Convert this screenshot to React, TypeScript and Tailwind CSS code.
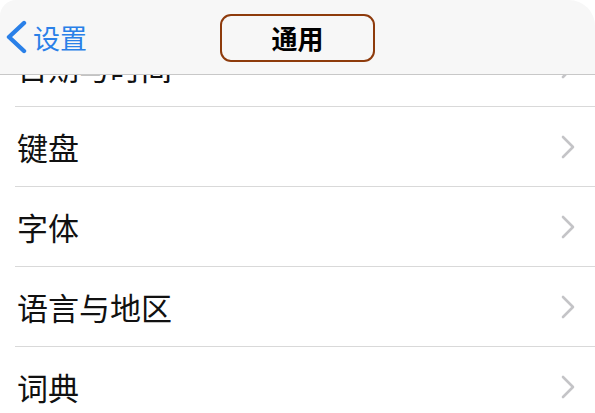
import React from "react";

const rows = ["日期与时间", "键盘", "字体", "语言与地区", "词典"];

function Chevron() {
    return (
        <svg width="16" height="24" viewBox="0 0 16 24" className="shrink-0">
            <path d="M3 2 L13 12 L3 22" fill="none" stroke="#c4c4c7" strokeWidth="2.6" strokeLinecap="round" strokeLinejoin="round" />
        </svg>
    );
}

export default function App() {
    return (
        <div
            className="w-[595px] h-[413px] overflow-hidden bg-white flex flex-col"
            style={{ fontFamily: '"Noto Sans CJK SC", "Noto Sans", sans-serif' }}
        >
            {/* Navigation bar */}
            <div className="relative shrink-0 h-[75px] bg-[#f7f7f7] border-b border-[#c8c8c8] rounded-tl-[16px] rounded-tr-[26px] flex items-center">
                <div className="flex items-center pl-[4px] text-[#2a80e8]">
                    <svg width="24" height="34" viewBox="0 0 24 34">
                        <path d="M20 3 L5 17 L20 31" fill="none" stroke="#2a80e8" strokeWidth="4.4" strokeLinecap="round" strokeLinejoin="round" />
                    </svg>
                    <span className="ml-[5px] text-[27px] leading-none">设置</span>
                </div>
                <div className="absolute left-[220px] top-[14px] w-[155px] h-[48px] rounded-[11px] border-[2.5px] border-[#8e3b0c] flex items-center justify-center">
                    <span className="text-[26px] font-semibold leading-none text-black">通用</span>
                </div>
            </div>

            {/* Settings list, scrolled so the first row sits under the bar */}
            <div className="flex-1 overflow-hidden">
                <div className="-mt-[48px]">
                    {rows.map((r) => (
                        <div key={r} className="pl-[15px]">
                            <div className="h-[80px] flex items-center justify-between pr-[19px] border-b border-[#d9d9d9]">
                                <span className="pl-[2px] text-[31px] leading-none text-[#111]">{r}</span>
                                <Chevron />
                            </div>
                        </div>
                    ))}
                </div>
            </div>
        </div>
    );
}
